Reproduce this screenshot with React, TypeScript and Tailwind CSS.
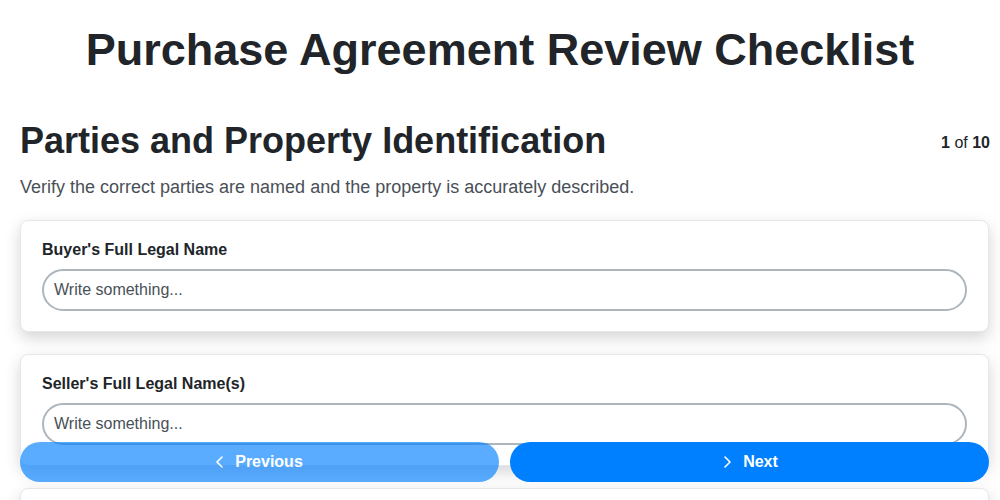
import React from "react";

const fields = [
  "Buyer's Full Legal Name",
  "Seller's Full Legal Name(s)",
  "Property Street Address",
  "Legal Description / Parcel Number",
];

function Chevron({ dir, className }: { dir: "left" | "right"; className?: string }) {
  return (
    <svg className={className} width="7" height="12" viewBox="0 0 7 12" fill="none" stroke="currentColor" strokeWidth="1.6" strokeLinecap="round" strokeLinejoin="round">
      {dir === "left" ? <polyline points="6,1 1,6 6,11" /> : <polyline points="1,1 6,6 1,11" />}
    </svg>
  );
}

export default function App() {
  return (
    <div className="min-h-screen bg-white font-['Liberation_Sans',Arial,sans-serif] text-[#212529]">
      <div className="px-[10px] pb-24">
        <h1 className="pt-[27px] text-center text-[45px] font-bold leading-none">
          Purchase Agreement Review Checklist
        </h1>
        <div className="pl-[10px]">
          <div className="mt-[49px] flex items-center justify-between">
            <h2 className="text-4xl font-bold leading-10">Parties and Property Identification</h2>
            <div className="pt-[3px] text-base leading-6">
              <span className="font-bold">1</span> of <span className="font-bold">10</span>
            </div>
          </div>
          <p className="mt-[12px] text-lg leading-7 text-[#495057]">
            Verify the correct parties are named and the property is accurately described.
          </p>
          <div className="mt-[19px] flex flex-col gap-[22px]">
            {fields.map((f) => (
              <div
                key={f}
                className="mr-px rounded-lg border border-[#e5e7eb] bg-white px-[21px] pb-5 pt-[17px] shadow-[0_6px_16px_rgba(0,0,0,0.17)]"
              >
                <label className="mb-[7px] block text-base font-bold leading-6">{f}</label>
                <input
                  type="text"
                  placeholder="Write something..."
                  className="h-[42px] w-full rounded-full border-2 border-[#adb5bd] bg-white px-[10px] text-base text-[#212529] outline-none placeholder:text-[#495057]"
                />
              </div>
            ))}
          </div>
        </div>
      </div>
      <div className="fixed bottom-[18px] left-5 right-[11px] flex gap-[11px]">
        <button className="flex h-10 flex-1 items-center justify-center gap-[12px] rounded-full bg-[#0080ff] text-base font-bold text-white opacity-65">
          <Chevron dir="left" />
          Previous
        </button>
        <button className="flex h-10 flex-1 items-center justify-center gap-[12px] rounded-full bg-[#0080ff] text-base font-bold text-white">
          <Chevron dir="right" className="ml-[3px]" />
          Next
        </button>
      </div>
    </div>
  );
}
